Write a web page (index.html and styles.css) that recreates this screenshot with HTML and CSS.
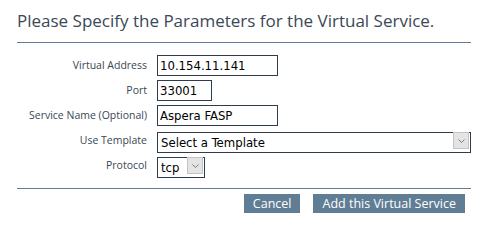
FILE: index.html
```html
<!DOCTYPE html>
<html>
<head>
<meta charset="utf-8">
<link rel="stylesheet" href="styles.css">
</head>
<body>
<div class="panel">
  <h1 class="title">Please Specify the Parameters for the Virtual Service.</h1>
  <form class="form">
    <label class="lbl" for="va">Virtual Address</label>
    <div class="field"><input id="va" class="txt w120" type="text" value="10.154.11.141"></div>
    <label class="lbl" for="port">Port</label>
    <div class="field"><input id="port" class="txt w54" type="text" value="33001"></div>
    <label class="lbl" for="sn">Service Name (Optional)</label>
    <div class="field"><input id="sn" class="txt w120" type="text" value="Aspera FASP"></div>
    <label class="lbl" for="tpl">Use Template</label>
    <div class="field"><span class="sel w313"><select id="tpl"><option>Select a Template</option></select><span class="arrow"><svg width="7" height="4" viewBox="0 0 7 4"><path d="M0.5 0.5 L3.5 3.5 L6.5 0.5" fill="none" stroke="#7a7a7a" stroke-width="1"/></svg></span></span></div>
    <label class="lbl" for="proto">Protocol</label>
    <div class="field"><span class="sel w48"><select id="proto"><option>tcp</option><option>udp</option></select><span class="arrow"><svg width="7" height="4" viewBox="0 0 7 4"><path d="M0.5 0.5 L3.5 3.5 L6.5 0.5" fill="none" stroke="#7a7a7a" stroke-width="1"/></svg></span></span></div>
  </form>
  <div class="actions">
    <button class="btn" type="button">Cancel</button>
    <button class="btn" type="button">Add this Virtual Service</button>
  </div>
</div>
</body>
</html>
```

FILE: styles.css
```css
html, body {
  margin: 0;
  padding: 0;
  background: #ffffff;
}
.panel {
  margin-left: 17px;
  width: 454px;
  font-family: "Open Sans", "Noto Sans", sans-serif;
}
.title {
  margin: 0;
  padding-top: 10px;
  height: 43px;
  box-sizing: border-box;
  font-size: 17px;
  font-weight: normal;
  line-height: 22px;
  color: #3b4856;
  border-bottom: 1px solid #5f7c94;
  white-space: nowrap;
}
.form {
  display: grid;
  grid-template-columns: 130px 1fr;
  column-gap: 10px;
  row-gap: 4px;
  padding-top: 12px;
  padding-bottom: 12px;
  border-bottom: 1px solid #5f7c94;
  align-items: center;
}
.lbl {
  text-align: right;
  font-size: 10.5px;
  color: #3a4754;
  line-height: 21px;
  white-space: nowrap;
}
.field {
  display: flex;
  height: 21px;
}
.txt {
  box-sizing: border-box;
  height: 21px;
  margin: 0;
  padding: 0 2px;
  border: 1px solid #2f3d4a;
  font-family: "DejaVu Sans Condensed", "DejaVu Sans", sans-serif;
  font-size: 13px;
  color: #000;
  outline: none;
  background: #fff;
}
.w120 { width: 121px; }
.w54 { width: 55px; }
.w313 { width: 314px; }
.w48 { width: 48px; }
.sel {
  position: relative;
  display: inline-block;
  height: 21px;
}
.sel select {
  appearance: none;
  -webkit-appearance: none;
  box-sizing: border-box;
  width: 100%;
  height: 21px;
  margin: 0;
  padding: 0 0 0 3px;
  border: 1px solid #2f3d4a;
  border-radius: 0;
  background: #fff;
  font-family: "DejaVu Sans Condensed", "DejaVu Sans", sans-serif;
  font-size: 13px;
  color: #000;
  outline: none;
}
.sel .arrow {
  position: absolute;
  top: 2px;
  right: 2px;
  width: 16px;
  height: 17px;
  box-sizing: border-box;
  background: #e4e4e4;
  border: 1px solid #c4c4c4;
  display: flex;
  align-items: center;
  justify-content: center;
  pointer-events: none;
}
.actions {
  display: flex;
  justify-content: flex-end;
  gap: 13px;
  padding-top: 5px;
  padding-right: 6px;
}
.btn {
  height: 19px;
  margin: 0;
  padding: 0 9px;
  border: none;
  border-radius: 0;
  background: #5f7d95;
  color: #fff;
  font-family: "Open Sans", "Noto Sans", sans-serif;
  font-size: 12.5px;
  line-height: 19px;
}
```
